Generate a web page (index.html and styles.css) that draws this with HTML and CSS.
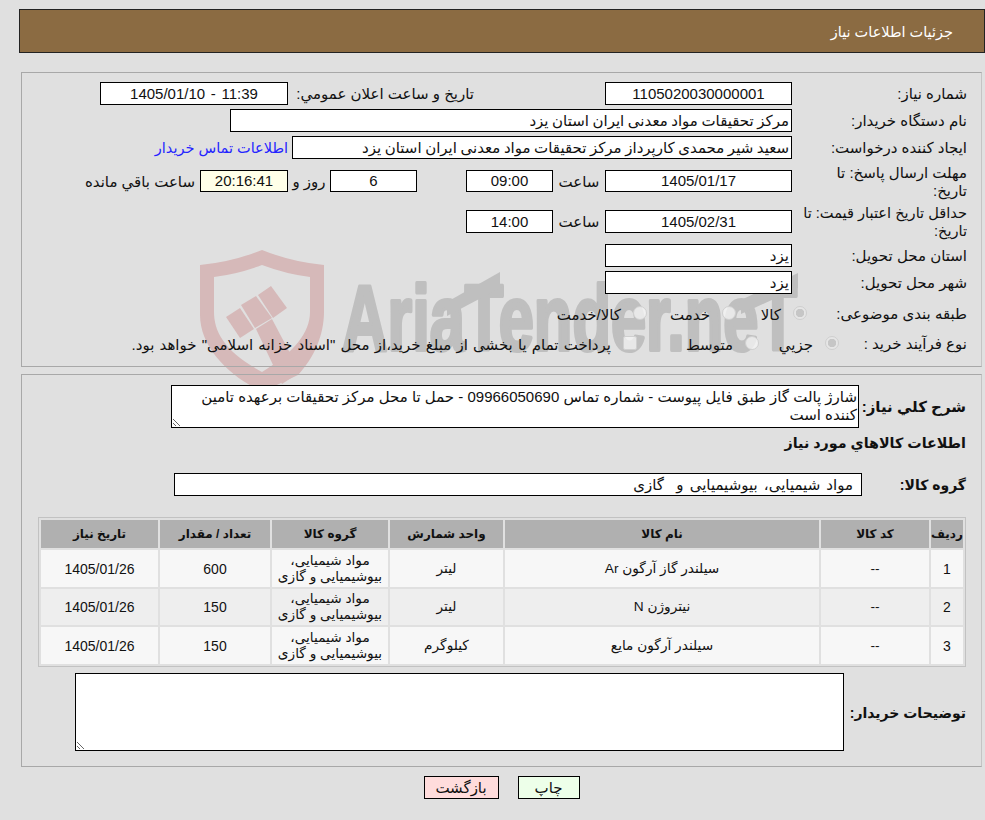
FILE: index.html
```html
<!DOCTYPE html>
<html lang="fa" dir="rtl">
<head>
<meta charset="utf-8">
<title>جزئیات اطلاعات نیاز</title>
<link rel="stylesheet" href="styles.css">
</head>
<body>
<svg class="watermark" viewBox="0 0 985 420" width="985" height="420" aria-hidden="true">
  <g fill="#d6b9b9">
    <path fill-rule="evenodd" d="M262 250 Q232 262 200 265 V315 C200 345 225 372 255 388 L262 392 L298 375 C314 358 324 335 324 312 V265 Q292 262 262 250 Z M262 265 Q238 274 214 277 V312 C214 332 225 352 262 372 C295 352 310 332 310 312 V277 Q286 274 262 265 Z"/>
    <polygon points="226,317 240,308 254,329 240,338"/>
    <polygon points="241,305 256,296 272,318 255,328"/>
    <polygon points="258,295 271,286 287,308 273,318"/>
    <polygon points="256,329 272,319 300,372 282,384"/>
  </g>
  <text class="wm-text" x="342" y="350" textLength="455" lengthAdjust="spacingAndGlyphs" direction="ltr">AriaTender.neT</text>
  <polygon fill="#bfbfbf" points="447,302 500,272 500,288 447,316"/>
  <polygon fill="#bfbfbf" points="741,300 798,273 798,288 741,314"/>
</svg>

<main class="page">
  <header class="titlebar"><h1 class="title">جزئیات اطلاعات نیاز</h1></header>

  <section class="panel panel-info">
    <div class="row row-std">
      <div class="label">شماره نیاز:</div>
      <div class="field w187 center">1105020030000001</div>
      <div class="sublabel w317">تاریخ و ساعت اعلان عمومي:</div>
      <div class="field w188 center spaced">11:39 - 1405/01/10</div>
    </div>
    <div class="row row-std">
      <div class="label">نام دستگاه خریدار:</div>
      <div class="field w562 tighter">مرکز تحقیقات مواد معدنی ایران استان یزد</div>
    </div>
    <div class="row row-std">
      <div class="label">ایجاد کننده درخواست:</div>
      <div class="field w500 tighter">سعید شیر محمدی کارپرداز مرکز تحقیقات مواد معدنی ایران استان یزد</div>
      <a class="contact" href="#">اطلاعات تماس خریدار</a>
    </div>
    <div class="row row-tall">
      <div class="label">مهلت ارسال پاسخ: تا<br>تاریخ:</div>
      <div class="field w187 center h22">1405/01/17</div>
      <div class="unit w52">ساعت</div>
      <div class="field w87 center h22">09:00</div>
      <div class="spacer49"></div>
      <div class="field w87 center h22">6</div>
      <div class="unit w42">روز و</div>
      <div class="field w88 center h22 cream">20:16:41</div>
      <div class="remain">ساعت باقي مانده</div>
    </div>
    <div class="row row-tall2">
      <div class="label label-fit">حداقل تاریخ اعتبار قیمت: تا<br>تاریخ:</div>
      <div class="field w187 center">1405/02/31</div>
      <div class="unit w52">ساعت</div>
      <div class="field w87 center">14:00</div>
    </div>
    <div class="row row-std">
      <div class="label">استان محل تحویل:</div>
      <div class="field w187">یزد</div>
    </div>
    <div class="row row-std">
      <div class="label">شهر محل تحویل:</div>
      <div class="field w187">یزد</div>
    </div>
    <div class="row row-radio">
      <div class="label label-r1">طبقه بندی موضوعی:</div>
      <label class="opt w71"><input class="radio" type="radio" name="cat" checked disabled><span>کالا</span></label>
      <label class="opt w89"><input class="radio" type="radio" name="cat" disabled><span>خدمت</span></label>
      <label class="opt"><input class="radio" type="radio" name="cat" disabled><span>کالا/خدمت</span></label>
    </div>
    <div class="row row-radio2">
      <div class="label label-r2">نوع فرآیند خرید :</div>
      <label class="opt w80"><input class="radio" type="radio" name="proc" checked disabled><span>جزيي</span></label>
      <label class="opt w122"><input class="radio" type="radio" name="proc" disabled><span>متوسط</span></label>
      <label class="opt"><input class="check" type="checkbox" disabled><span class="payment">پرداخت تمام یا بخشی از مبلغ خرید،از محل "اسناد خزانه اسلامی" خواهد بود.</span></label>
    </div>
  </section>

  <section class="panel panel-items">
    <div class="row">
      <div class="blabel w107">شرح كلي نياز:</div>
      <textarea class="area area-desc" readonly>شارژ پالت گاز طبق فایل پیوست - شماره تماس 09966050690 - حمل تا محل مرکز تحقیقات برعهده تامین کننده است</textarea>
    </div>
    <h2 class="subhead">اطلاعات کالاهاي مورد نياز</h2>
    <div class="row row-group">
      <div class="blabel w104 fit">گروه کالا:</div>
      <div class="field w688 group">مواد شیمیایی، بیوشیمیایی و&nbsp; گازی</div>
    </div>
    <table class="items">
      <colgroup>
        <col class="c1"><col class="c2"><col class="c3"><col class="c4"><col class="c5"><col class="c6"><col class="c7">
      </colgroup>
      <thead>
        <tr><th>ردیف</th><th>کد کالا</th><th>نام کالا</th><th>واحد شمارش</th><th>گروه کالا</th><th>تعداد / مقدار</th><th>تاریخ نیاز</th></tr>
      </thead>
      <tbody>
        <tr><td class="num">1</td><td>--</td><td>سیلندر گاز آرگون Ar</td><td>لیتر</td><td>مواد شیمیایی، بیوشیمیایی و گازی</td><td class="num">600</td><td class="num">1405/01/26</td></tr>
        <tr><td class="num">2</td><td>--</td><td>نیتروژن N</td><td>لیتر</td><td>مواد شیمیایی، بیوشیمیایی و گازی</td><td class="num">150</td><td class="num">1405/01/26</td></tr>
        <tr><td class="num">3</td><td>--</td><td>سیلندر آرگون مایع</td><td>کیلوگرم</td><td>مواد شیمیایی، بیوشیمیایی و گازی</td><td class="num">150</td><td class="num">1405/01/26</td></tr>
      </tbody>
    </table>
    <div class="row">
      <div class="blabel w122 fit notes-label">توضیحات خریدار:</div>
      <textarea class="area area-notes" readonly></textarea>
    </div>
  </section>

  <div class="actions">
    <button class="btn btn-print" type="button">چاپ</button>
    <button class="btn btn-back" type="button">بازگشت</button>
  </div>
</main>
</body>
</html>
```
FILE: styles.css
```css
* { box-sizing: border-box; }
html, body { margin: 0; padding: 0; height: 820px; overflow: hidden; background: #e0e0e0; }
body { font-family: "Liberation Sans", "DejaVu Sans", sans-serif; font-size: 15px; color: #111; position: relative; }

.watermark { position: absolute; left: 0; top: 0; z-index: 0; }
.wm-text { font-family: "Liberation Sans", sans-serif; font-weight: 700; font-size: 93px; fill: #bfbfbf; stroke: #bfbfbf; stroke-width: 4px; stroke-linejoin: round; }

.page { position: relative; z-index: 1; padding-top: 9px; }

.titlebar { height: 44px; margin-left: 19px; background: #8b6b42; border: 1px solid #222; display: flex; align-items: center; padding-right: 31px; }
.title { margin: 2px 0 0; font-size: 14.5px; font-weight: 400; color: #fff; }

.panel { margin: 0 3px 0 21px; border: 1px solid #a8a8a8; border-right-color: #c4c4c4; }
.panel-info { margin-top: 19px; height: 295px; padding: 9px 14px 0 0; display: flex; flex-direction: column; gap: 4px; }
.panel-items { margin-top: 7px; height: 393px; padding: 10px 15px 0 15px; }

.row { display: flex; align-items: center; }
.row-std { height: 23px; }
.row-tall { height: 36px; }
.row-tall2 { height: 37px; }
.row-radio { height: 30px; }
.row-radio2 { height: 22px; }

.label { width: 175px; flex: none; padding-top: 1px; line-height: 18px; white-space: nowrap; }
.label-fit { font-size: 14.6px; }
.label-r1 { width: 160px; padding-top: 2px; }
.label-r2 { width: 128px; padding-top: 2px; }
.sublabel { text-align: right; padding-top: 1px; padding-right: 131px; }
.blabel { flex: none; font-weight: 700; font-size: 15px; white-space: nowrap; }
.fit { font-size: 14px; }
.notes-label { padding-top: 3px; }
.w107 { width: 107px; }
.w104 { width: 104px; }
.w122 { width: 122px; }

.field { flex: none; height: 23px; line-height: 21px; background: #fff; border: 1px solid #000; padding: 0 2px; white-space: nowrap; overflow: hidden; }
.center { text-align: center; }
.spaced { word-spacing: 1.5px; }
.tighter { word-spacing: -0.6px; }
.h22 { height: 22px; line-height: 20px; }
.cream { background: #ffffe8; }
.w187 { width: 187px; }
.w188 { width: 188px; }
.w317 { width: 317px; flex: none; }
.w562 { width: 562px; }
.w500 { width: 500px; }
.w88 { width: 88px; }
.w87 { width: 87px; }
.w688 { width: 688px; }

.unit { flex: none; text-align: center; padding-top: 1px; }
.w52 { width: 52px; }
.w42 { width: 42px; }
.spacer49 { width: 49px; flex: none; }
.remain { padding: 1px 5px 0 0; white-space: nowrap; }
.contact { color: #2424ff; text-decoration: none; padding-right: 4px; font-size: 14.5px; white-space: nowrap; }

.opt { display: flex; align-items: center; gap: 12px; flex: none; white-space: nowrap; }
.opt span { padding-top: 3px; }
.payment { word-spacing: 1px; }
.w71 { width: 71px; }
.w89 { width: 89px; }
.w80 { width: 80px; }
.w122.opt { width: 122px; }

.radio, .check { appearance: none; margin: 0; flex: none; width: 14px; height: 14px; border: 1px solid #cfcfcf; background: rgba(245,245,245,.75); }
.radio { border-radius: 50%; }
.radio:checked { background: radial-gradient(circle, #c6c6c6 0 4px, #e6e6e6 4.5px); }
.check { border-radius: 2px; }

.area { display: block; flex: none; background: #fff; border: 1px solid #000; border-radius: 0; margin: 0; padding: 2px 1px 0 2px; font: inherit; line-height: 18px; color: #111; overflow: hidden; outline: none; }
.area-desc { width: 688px; height: 43px; }
.area-notes { width: 769px; height: 78px; }

.subhead { margin: 4px 0 0; height: 23px; line-height: 23px; font-size: 14.3px; font-weight: 700; }
.row-group { margin-top: 18px; }
.group { padding-right: 8px; word-spacing: 2px; }

.items { margin: 21px 0 6px; width: 928px; table-layout: fixed; border-collapse: separate; border-spacing: 2px; border: 1px solid #c2c2c2; background: #e0e0e0; font-size: 13.7px; }
.items th { height: 28px; padding: 0; background: #b0b0b0; font-size: 12px; font-weight: 700; }
.items td { height: 36.5px; padding: 1px 2px 0; text-align: center; background: #f7f7f7; line-height: 16px; }
.items td.num { font-size: 14px; }
.items tbody tr:nth-child(2) td { background: #eeeeee; }
.c1 { width: 32px; }
.c2 { width: 108px; }
.c3 { width: 314px; }
.c4 { width: 113px; }
.c5 { width: 116px; }
.c6 { width: 110px; }
.c7 { width: 117px; }

.actions { display: flex; justify-content: center; gap: 19px; margin: 9px 3px 0 21px; }
.btn { height: 23px; padding: 0; border: 1px solid #000; border-radius: 0; font: inherit; color: #111; }
.btn-print { width: 62px; background: #edffe9; }
.btn-back { width: 75px; background: #ffdcdc; }
```
